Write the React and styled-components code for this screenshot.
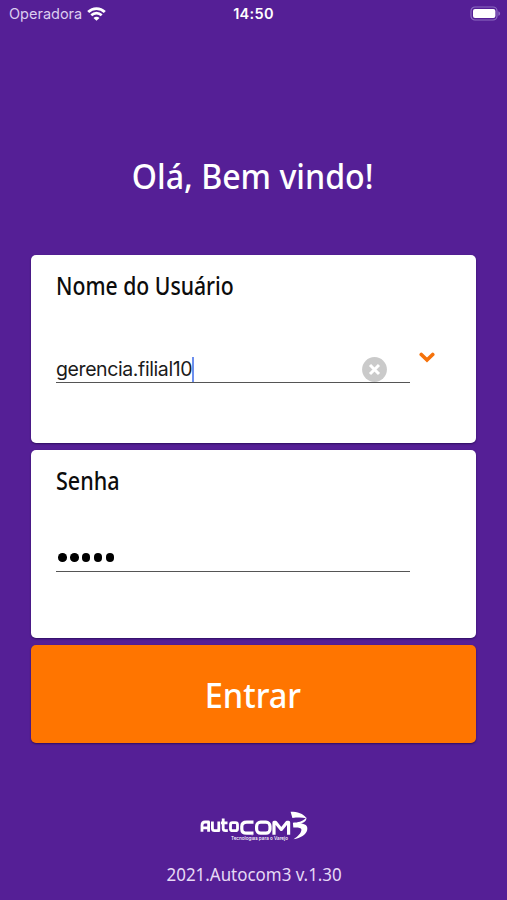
import React from "react";
import styled, { createGlobalStyle } from "styled-components";

const App = () => {
	return (
		<>
			<GlobalStyle />
			<Screen>
				<StatusBar>
					<Carrier>
						<span>Operadora</span>
						<WifiIcon />
					</Carrier>
					<Clock>14:50</Clock>
					<BatteryIcon />
				</StatusBar>

				<Title>
					<Squeeze $x={0.918}>Olá, Bem vindo!</Squeeze>
				</Title>

				<Form>
					{/* user */}
					<Card>
						<Label>
							<Squeeze $x={0.865} $left>
								Nome do Usuário
							</Squeeze>
						</Label>
						<FieldRow>
							<Field $height={42}>
								<Value>gerencia.filial10</Value>
								<Caret />
								<ClearIcon />
							</Field>
							<ChevronIcon />
						</FieldRow>
					</Card>

					{/* password */}
					<Card>
						<Label>
							<Squeeze $x={0.88} $left>
								Senha
							</Squeeze>
						</Label>
						<FieldRow>
							<Field $height={36}>
								<Dots>
									{[0, 1, 2, 3, 4].map((n) => (
										<Dot key={n} />
									))}
								</Dots>
							</Field>
						</FieldRow>
					</Card>

					<Submit type="button">
						<Squeeze $x={0.93}>Entrar</Squeeze>
					</Submit>
				</Form>

				<Footer>
					<Logo />
					<Version>
						<Squeeze $x={0.94}>2021.Autocom3 v.1.30</Squeeze>
					</Version>
				</Footer>
			</Screen>
		</>
	);
};

const WifiIcon = () => (
	<svg width="19" height="14" viewBox="0 0 19 14" fill="none" stroke="#fff">
		<path d="M1.2 5C5.8.4 13.2.4 17.8 5" strokeWidth="2.8" />
		<path d="M4.3 8.3c3-2.9 7.4-2.9 10.4 0" strokeWidth="2.6" />
		<path d="M9.5 13.8 6.5 10.9c1.7-1.6 4.3-1.6 6 0z" fill="#fff" stroke="none" />
	</svg>
);

const BatteryIcon = () => (
	<svg width="31" height="15" viewBox="0 0 31 15">
		<rect x="1" y="1" width="26" height="13" rx="4" fill="none" stroke="#8d6cc2" strokeWidth="1.2" />
		<rect x="3" y="3" width="22.4" height="9" rx="2" fill="#fff" />
		<path d="M28.3 5.2c2.4.8 2.4 3.8 0 4.6z" fill="#8d6cc2" />
	</svg>
);

const ClearIcon = () => (
	<ClearSvg width="25" height="25" viewBox="0 0 25 25">
		<circle cx="12.5" cy="12.5" r="12.4" fill="#cacaca" />
		<path
			d="M8 8l9 9M17 8l-9 9"
			stroke="#fff"
			strokeWidth="3"
		/>
	</ClearSvg>
);

const ChevronIcon = () => (
	<ChevronSvg width="16" height="11" viewBox="0 0 16 11">
		<path
			d="M2.3 2.5 8 8l5.7-5.5"
			fill="none"
			stroke="#f5720b"
			strokeWidth="3.7"
			strokeLinecap="round"
		/>
	</ChevronSvg>
);

const Logo = () => (
	<svg width="110" height="32" viewBox="0 0 110 32" fill="#fff">
		<g fill="none" stroke="#fff" strokeWidth="2.8" strokeLinejoin="round">
			<path d="M3 20.8v-6.4q0-3.4 3-3.4h3.6v9.8M3 16.8h6.6" />
			<path d="M13.4 10.4v7.1q0 2.2 2.2 2.2h4.2v-9.3" />
			<path d="M24.2 7.4v10.1q0 2.2 2.2 2.2h2.4M22 11.9h6.5" />
			<rect x="31.5" y="11.7" width="7" height="8" rx="2" />
			<path
				d="M54.5 11.2h-6.7q-5 0-5 4.3v2.4q0 4.3 5 4.3h6.7"
				strokeWidth="3.2"
			/>
			<rect x="57.6" y="11.2" width="13.4" height="11" rx="4" strokeWidth="3.2" />
			<path
				d="M75 23.8V11.4h1.7l5.6 7 5.6-7h1.7v12.4"
				strokeWidth="3.2"
			/>
		</g>
		<path d="M91.6.8c6.8 0 12.8 1.6 15.8 6.4-4.4-.8-9-.8-14-.2z" />
		<path d="M107.4 6.5c.4 3.4-2.5 5.3-6.2 6.1 4.6.1 8 2 7 6.3-1.1 4.7-6.6 8.2-13.6 9.3 4.6-3 7.6-6.3 7.8-9.2.2-2.2-3.6-2.6-8.1-2.4l-.4-4.8c5-.2 9.6-1.1 13-4.7z" />
		<text
			x="32"
			y="29"
			fontFamily="Inter, sans-serif"
			fontSize="5"
			fontWeight="500"
			textLength="57"
			lengthAdjust="spacingAndGlyphs"
		>
			Tecnologias para o Varejo
		</text>
	</svg>
);

const GlobalStyle = createGlobalStyle`
	* {
		box-sizing: border-box;
	}
	body {
		margin: 0;
		background: #551f96;
		font-family: "Noto Sans", sans-serif;
	}
`;

const Screen = styled.main`
	display: flex;
	flex-direction: column;
	width: 507px;
	height: 900px;
	overflow: hidden;
	background: #551f96;
`;

const Squeeze = styled.span`
	display: inline-block;
	white-space: nowrap;
	transform: scaleX(${({ $x }) => $x});
	transform-origin: ${({ $left }) => ($left ? "left" : "center")} center;
`;

const StatusBar = styled.header`
	display: grid;
	grid-template-columns: 1fr auto 1fr;
	align-items: center;
	height: 27px;
	padding: 0 6px 0 9px;
	color: #fff;
	font-family: Inter, sans-serif;
	font-size: 14.5px;
	svg:last-child {
		justify-self: end;
	}
`;

const Carrier = styled.div`
	display: flex;
	align-items: center;
	gap: 5px;
	color: #dccdf0;
`;

const Clock = styled.time`
	margin-right: 3px;
	font-weight: 600;
	letter-spacing: 0.3px;
`;

const Title = styled.h1`
	margin: 122px 0 0;
	padding-right: 2px;
	height: 54px;
	line-height: 54px;
	text-align: center;
	color: #fff;
	font-size: 35px;
	font-weight: 540;
`;

const Form = styled.form`
	display: flex;
	flex-direction: column;
	gap: 7px;
	margin: 52px 31px 0;
`;

const Card = styled.section`
	height: 188px;
	padding: 14px 25px 0;
	border-radius: 5px;
	background: #fff;
	box-shadow: 0 1px 2px rgba(20, 0, 60, 0.6);
`;

const Label = styled.label`
	display: block;
	height: 34px;
	line-height: 34px;
	color: #0c0c0c;
	font-size: 24.5px;
	font-weight: 550;
`;

const FieldRow = styled.div`
	display: flex;
	align-items: flex-start;
	gap: 9px;
	padding-top: 38px;
`;

const Field = styled.div`
	display: flex;
	align-items: flex-end;
	width: 354px;
	height: ${({ $height }) => $height}px;
	border-bottom: 1px solid #555;
`;

const Value = styled.span`
	line-height: 26px;
	color: #1b1b1b;
	font-family: Inter, sans-serif;
	font-size: 19.5px;
	letter-spacing: -0.4px;
`;

const Caret = styled.i`
	width: 2px;
	height: 25px;
	background: #6d8fee;
`;

const ClearSvg = styled.svg`
	margin: 0 23px 0 auto;
`;

const ChevronSvg = styled.svg`
	margin-top: 11px;
`;

const Dots = styled.div`
	display: flex;
	gap: 3.2px;
	padding: 0 0 9px 2px;
`;

const Dot = styled.i`
	width: 8.7px;
	height: 8.7px;
	border-radius: 50%;
	background: #000;
`;

const Submit = styled.button`
	height: 98px;
	padding: 0 2px 0 0;
	border: none;
	border-radius: 5px;
	background: #ff7500;
	box-shadow: 0 1px 2px rgba(20, 0, 60, 0.6);
	color: #fff;
	font-family: inherit;
	font-size: 35px;
	font-weight: 540;
`;

const Footer = styled.footer`
	display: flex;
	flex-direction: column;
	align-items: center;
	margin-top: 68px;
`;

const Version = styled.p`
	margin: 17px 0 0;
	padding-left: 2px;
	line-height: 28px;
	color: #e6d9f5;
	font-size: 18px;
`;

export default App;
